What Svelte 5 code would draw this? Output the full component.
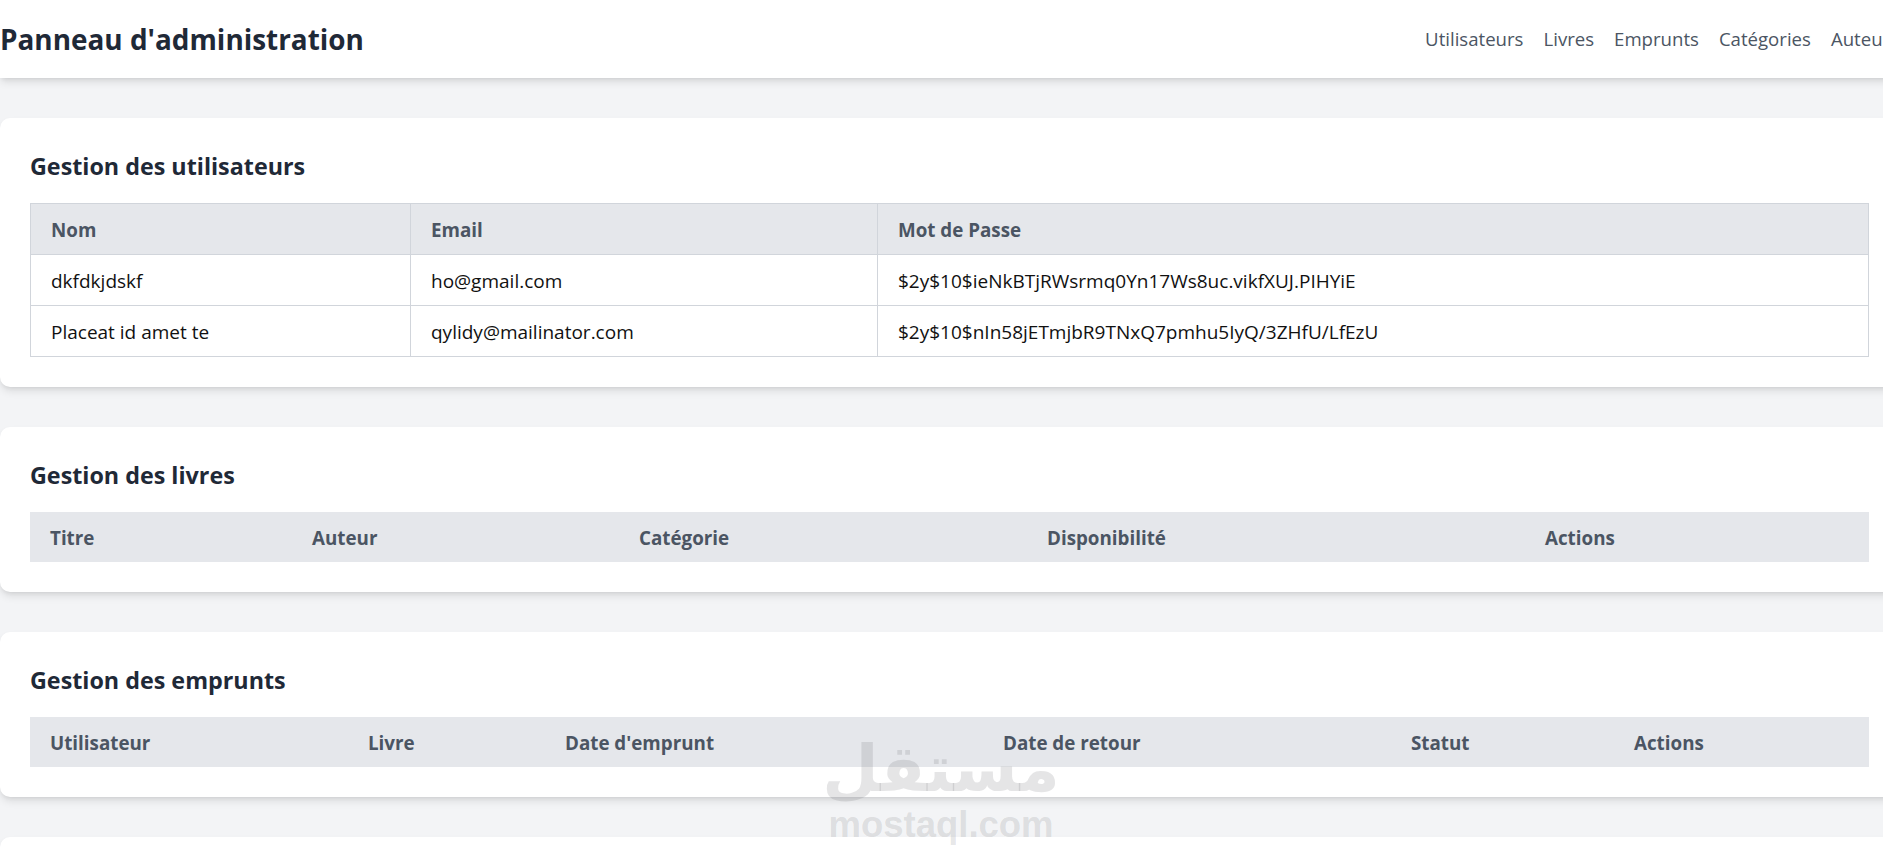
<script>
  const links = ["Utilisateurs", "Livres", "Emprunts", "Catégories", "Auteurs"];

  const sections = [
    {
      title: "Gestion des utilisateurs",
      bordered: true,
      columns: [
        { label: "Nom", width: 380 },
        { label: "Email", width: 467 },
        { label: "Mot de Passe", width: 991 },
      ],
      rows: [
        ["dkfdkjdskf", "ho@gmail.com", "$2y$10$ieNkBTjRWsrmq0Yn17Ws8uc.vikfXUJ.PIHYiE"],
        ["Placeat id amet te", "qylidy@mailinator.com", "$2y$10$nIn58jETmjbR9TNxQ7pmhu5IyQ/3ZHfU/LfEzU"],
      ],
    },
    {
      title: "Gestion des livres",
      columns: [
        { label: "Titre", width: 262 },
        { label: "Auteur", width: 327 },
        { label: "Catégorie", width: 408 },
        { label: "Disponibilité", width: 498 },
        { label: "Actions", width: 344 },
      ],
      rows: [],
    },
    {
      title: "Gestion des emprunts",
      columns: [
        { label: "Utilisateur", width: 318 },
        { label: "Livre", width: 197 },
        { label: "Date d'emprunt", width: 438 },
        { label: "Date de retour", width: 408 },
        { label: "Statut", width: 223 },
        { label: "Actions", width: 255 },
      ],
      rows: [],
    },
    {
      title: "Gestion des catégories",
      columns: [
        { label: "Nom", width: 1500 },
        { label: "Actions", width: 339 },
      ],
      rows: [],
    },
  ];
</script>

<div class="page">
  <header class="topbar">
    <h1>Panneau d'administration</h1>
    <nav>
      {#each links as link}
        <a href="#top">{link}</a>
      {/each}
    </nav>
  </header>

  <main>
    {#each sections as section}
      <section class="card">
        <h2>{section.title}</h2>
        <table class:bordered={section.bordered}>
          <colgroup>
            {#each section.columns as col}
              <col style:width="{col.width}px" />
            {/each}
          </colgroup>
          <thead>
            <tr>
              {#each section.columns as col}
                <th>{col.label}</th>
              {/each}
            </tr>
          </thead>
          <tbody>
            {#each section.rows as row}
              <tr>
                {#each row as cell}
                  <td>{cell}</td>
                {/each}
              </tr>
            {/each}
          </tbody>
        </table>
      </section>
    {/each}
  </main>

  <div class="watermark">
    <span class="wm-ar" dir="rtl" lang="ar">مستقل</span>
    <span class="wm-en">mostaql.com</span>
  </div>
</div>

<style>
  :global(html), :global(body) {
    margin: 0;
    width: 1883px;
    height: 860px;
    overflow: hidden;
    background: #f3f4f6;
  }
  .page {
    position: relative;
    width: 1899px;
    height: 860px;
    overflow: hidden;
    font-family: "Open Sans", "Noto Sans", sans-serif;
    font-size: 19px;
    line-height: 30px;
    color: #111;
  }
  .topbar {
    display: flex;
    align-items: center;
    justify-content: space-between;
    height: 78px;
    background: #fff;
    box-shadow: 0 5px 8px -1px rgba(0, 0, 0, 0.1), 0 2px 5px -2px rgba(0, 0, 0, 0.1);
    position: relative;
  }
  h1 {
    margin: 0;
    font-size: 27.9px;
    font-weight: 700;
    line-height: 40px;
    color: #1f2937;
  }
  nav {
    display: flex;
    gap: 20px;
    font-size: 18.6px;
  }
  nav a {
    color: #4b5563;
    text-decoration: none;
  }
  main {
    display: flex;
    flex-direction: column;
    gap: 40px;
    padding-top: 40px;
  }
  .card {
    padding: 30px;
    background: #fff;
    border-radius: 10px;
    box-shadow: 0 5px 8px -1px rgba(0, 0, 0, 0.1), 0 2px 5px -2px rgba(0, 0, 0, 0.1);
  }
  h2 {
    margin: 0 0 20px;
    padding-top: 1px;
    height: 34px;
    font-size: 23.3px;
    font-weight: 700;
    line-height: 35px;
    color: #1f2937;
  }
  table {
    width: 1839px;
    border-collapse: collapse;
    table-layout: fixed;
  }
  table.bordered {
    width: 1838px;
  }
  th {
    padding: 11px 20px 9px;
    background: #e5e7eb;
    font-size: 18.8px;
    font-weight: 700;
    text-align: left;
    color: #4b5563;
  }
  td {
    padding: 11px 20px 9px;
    white-space: nowrap;
  }
  .bordered th, .bordered td {
    border: 1px solid #d1d5db;
  }
  .watermark {
    position: absolute;
    left: 829px;
    top: 731px;
    width: 224px;
    display: flex;
    flex-direction: column;
    align-items: center;
    color: rgba(110, 110, 115, 0.18);
    pointer-events: none;
  }
  .wm-ar {
    font-family: "DejaVu Sans", sans-serif;
    font-weight: 700;
    font-size: 65px;
    line-height: 76px;
  }
  .wm-en {
    font-family: "Liberation Sans", sans-serif;
    font-weight: 700;
    font-size: 36.5px;
    line-height: 36px;
  }
</style>
